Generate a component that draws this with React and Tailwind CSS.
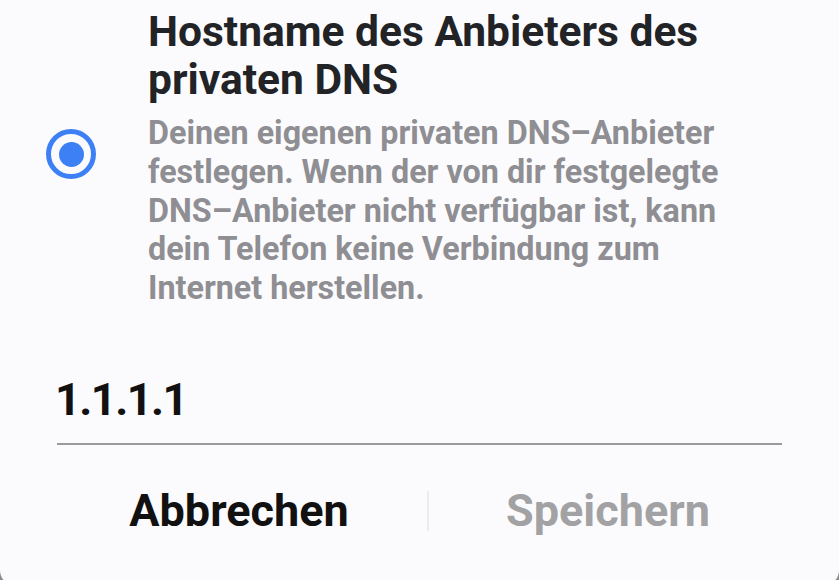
export default function App() {
  return (
    <div className="h-[580px] w-[839px] overflow-hidden bg-[#8c8c8c] font-['Roboto',sans-serif]">
      <div className="h-[586px] rounded-b-[16px] bg-[#fbfbfd] flex flex-col">
        {/* option row */}
        <div className="flex items-start pl-[46px]">
          <div className="mt-[129px] w-[50px] h-[50px] rounded-full border-[5px] border-[#3d80f6] flex items-center justify-center flex-shrink-0">
            <div className="w-[25px] h-[25px] rounded-full bg-[#3d80f6]"></div>
          </div>
          <div className="ml-[52px] w-[600px] pt-[8px]">
            <h1 className="text-[42.5px] leading-[48px] font-bold text-[#222326]">
              Hostname des Anbieters des privaten DNS
            </h1>
            <p className="mt-[10px] text-[32.3px] leading-[38.8px] font-bold text-[#8e8e93]">
              Deinen eigenen privaten DNS–Anbieter festlegen. Wenn der von dir festgelegte DNS–Anbieter nicht verfügbar ist, kann dein Telefon keine Verbindung zum Internet herstellen.
            </p>
          </div>
        </div>

        {/* input */}
        <div className="mx-[57px] mt-[68px] border-b-2 border-[#9a9a9a] pb-[19px]">
          <div className="-ml-[2px] text-[45px] leading-[48px] font-bold tracking-[-1.5px] text-[#111]">1.1.1.1</div>
        </div>

        {/* buttons */}
        <div className="ml-[57px] mt-[41px] flex items-center">
          <button className="w-[364px] text-[45px] leading-[50px] font-bold text-[#111]">Abbrechen</button>
          <div className="ml-[6px] w-[2px] h-[40px] bg-[#ececee]"></div>
          <button className="w-[358px] text-[45px] leading-[50px] font-bold text-[#a2a2a4]">Speichern</button>
        </div>
      </div>
    </div>
  );
}
